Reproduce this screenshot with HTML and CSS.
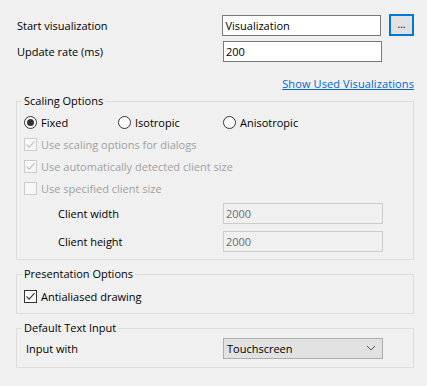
FILE: index.html
```html
<!DOCTYPE html>
<html lang="en">
<head>
  <meta charset="UTF-8" />
  <title>Visualization Settings</title>
  <link rel="stylesheet" href="styles.css">
</head>
<body>
  <div class="page">
    <div class="row first">
      <span class="label">Start visualization</span>
      <input class="field" type="text" value="Visualization" />
      <button class="browse">...</button>
    </div>
    <div class="row">
      <span class="label">Update rate (ms)</span>
      <input class="field" type="text" value="200" />
    </div>
    <div class="link-row">
      <a href="#" class="link">Show Used Visualizations</a>
    </div>

    <fieldset class="group scaling">
      <legend>Scaling Options</legend>
      <div class="opt radios">
        <label class="radio r-fixed">
          <svg width="13" height="13" viewBox="0 0 13 13"><circle cx="6.5" cy="6.5" r="6" fill="#fff" stroke="#333" /><circle cx="6.5" cy="6.5" r="3.5" fill="#333" /></svg>
          Fixed
        </label>
        <label class="radio r-iso">
          <svg width="13" height="13" viewBox="0 0 13 13"><circle cx="6.5" cy="6.5" r="6" fill="#fff" stroke="#333" /></svg>
          Isotropic
        </label>
        <label class="radio">
          <svg width="13" height="13" viewBox="0 0 13 13"><circle cx="6.5" cy="6.5" r="6" fill="#fff" stroke="#333" /></svg>
          Anisotropic
        </label>
      </div>
      <label class="opt check disabled">
        <span class="box"><svg width="11" height="11" viewBox="0 0 11 11"><path d="M1.5 5.5 L4.2 8.2 L9.5 2.2" fill="none" stroke="#c2c2c2" stroke-width="1.1" /></svg></span>
        Use scaling options for dialogs
      </label>
      <label class="opt check disabled">
        <span class="box"><svg width="11" height="11" viewBox="0 0 11 11"><path d="M1.5 5.5 L4.2 8.2 L9.5 2.2" fill="none" stroke="#c2c2c2" stroke-width="1.1" /></svg></span>
        Use automatically detected client size
      </label>
      <label class="opt check disabled">
        <span class="box"></span>
        Use specified client size
      </label>
      <div class="opt size-row first-size">
        <span class="sub-label">Client width</span>
        <input class="field off" type="text" value="2000" disabled />
      </div>
      <div class="opt size-row">
        <span class="sub-label">Client height</span>
        <input class="field off" type="text" value="2000" disabled />
      </div>
    </fieldset>

    <fieldset class="group presentation">
      <legend>Presentation Options</legend>
      <label class="opt check">
        <span class="box on"><svg width="11" height="11" viewBox="0 0 11 11"><path d="M1.5 5.5 L4.2 8.2 L9.5 2.2" fill="none" stroke="#333" stroke-width="1.1" /></svg></span>
        Antialiased drawing
      </label>
    </fieldset>

    <fieldset class="group text-input">
      <legend>Default Text Input</legend>
      <div class="opt select-row">
        <span class="input-label">Input with</span>
        <div class="select">
          <span>Touchscreen</span>
          <svg width="10" height="6" viewBox="0 0 10 6"><path d="M1 1 L5 5 L9 1" fill="none" stroke="#555" stroke-width="1" /></svg>
        </div>
      </div>
    </fieldset>
  </div>
</body>
</html>
```

FILE: styles.css
```css
* {
  box-sizing: border-box;
}

body {
  margin: 0;
  background: #f0f0f0;
  font-family: 'Open Sans', 'Noto Sans', sans-serif;
  font-size: 11px;
  color: #000;
}

.page {
  padding: 0 13px 0 16px;
}

.row {
  display: flex;
  align-items: center;
  height: 21px;
  margin-top: 5px;
}

.row.first {
  margin-top: 15px;
}

.label {
  width: 207px;
  padding-left: 1px;
}

.field {
  width: 159px;
  height: 21px;
  border: 1px solid #7a7a7a;
  background: #fff;
  font: inherit;
  padding: 0 2px;
  outline: none;
}

.browse {
  width: 25px;
  height: 22px;
  margin: -1px 0 0 8px;
  border: 2px solid #0078d7;
  background: #e1e1e1;
  font: inherit;
  font-size: 10px;
  padding: 0 0 3px;
  line-height: 1;
}

.link-row {
  margin-top: 14px;
  text-align: right;
  line-height: 16px;
}

.link {
  color: #0066cc;
  text-decoration: underline;
  letter-spacing: 0.1px;
}

.group {
  margin: 1px 0 0;
  padding: 0 0 0 7px;
  border: 1px solid #dcdcdc;
  min-width: 0;
}

.group legend {
  margin-left: -2px;
  padding: 0 2px;
  line-height: 16px;
}

.opt {
  display: flex;
  align-items: center;
  height: 22px;
}

.radios {
  margin-top: 2px;
}

.radio {
  display: flex;
  align-items: center;
  gap: 4px;
}

.r-fixed {
  width: 94px;
}

.r-iso {
  width: 105px;
}

.check {
  gap: 4px;
}

.box {
  width: 13px;
  height: 13px;
  border: 1px solid #333;
  background: #fff;
  display: flex;
  align-items: center;
  justify-content: center;
}

.check.disabled {
  color: #a0a0a0;
}

.check.disabled .box {
  border-color: #cccccc;
  background: #f7f7f7;
}

.size-row.first-size {
  margin-top: 3px;
}

.size-row + .size-row {
  margin-top: 6px;
}

.sub-label {
  width: 199px;
  padding-left: 34px;
}

.field.off {
  width: 160px;
  height: 21px;
  border-color: #cccccc;
  background: #f0f0f0;
  color: #6d6d6d;
}

.scaling {
  padding-bottom: 7px;
}

.presentation {
  margin-top: 6px;
  padding-bottom: 6px;
}

.presentation .opt {
  margin-top: 3px;
}

.text-input {
  margin-top: 6px;
  padding-bottom: 8px;
}

.select-row {
  margin-top: 1px;
}

.input-label {
  width: 199px;
  padding-left: 2px;
}

.select {
  width: 160px;
  height: 21px;
  border: 1px solid #adadad;
  background: #e1e1e1;
  display: flex;
  align-items: center;
  justify-content: space-between;
  padding: 0 6px 0 3px;
}
```
